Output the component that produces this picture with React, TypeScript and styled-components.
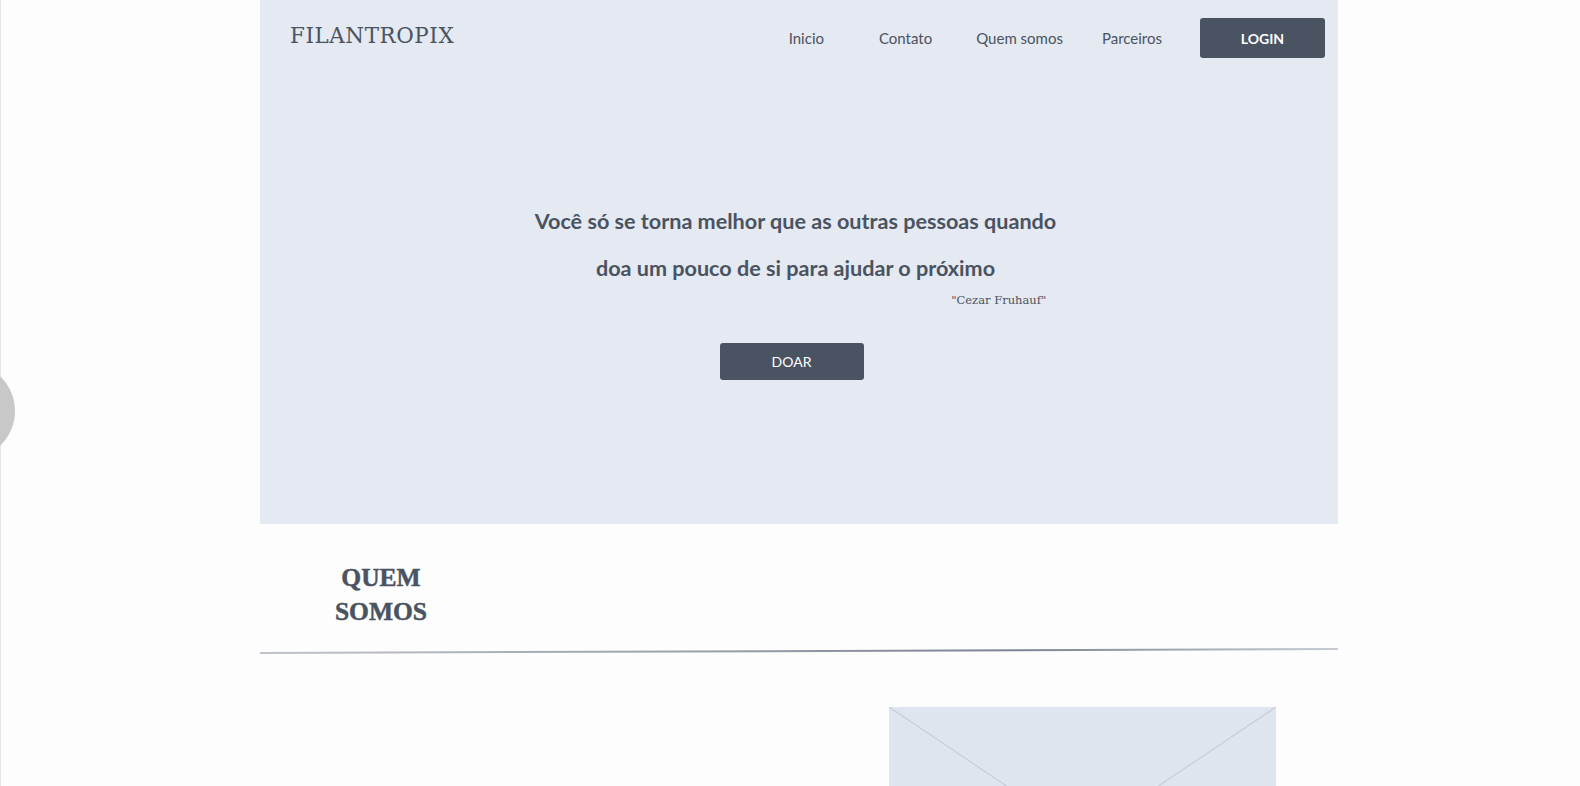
import React from 'react';
import styled, {createGlobalStyle} from 'styled-components';

const GlobalStyle = createGlobalStyle`
  html, body {
    margin: 0;
    padding: 0;
    background: #fdfdfd;
  }
  body {
    font-family: Lato, "Noto Sans", sans-serif;
    color: #4a5361;
    border-left: 1px solid #e6e6e6;
    min-height: 786px;
    overflow: hidden;
  }
`;

const navItems = ['Inicio', 'Contato', 'Quem somos', 'Parceiros'];

export default function App() {
  return (
    <>
      <GlobalStyle />
      <FloatingDot />
      <Page>
        <Hero>
          <Header>
            <Logo>FILANTROPIX</Logo>
            <Nav>
              {navItems.map(item => (
                <NavLink key={item}>{item}</NavLink>
              ))}
              <LoginButton>LOGIN</LoginButton>
            </Nav>
          </Header>
          <QuoteBlock>
            <QuoteText>
              Você só se torna melhor que as outras pessoas quando
              <br />
              doa um pouco de si para ajudar o próximo
            </QuoteText>
            <Author>"Cezar Fruhauf"</Author>
          </QuoteBlock>
          <DonateButton>DOAR</DonateButton>
        </Hero>
        <AboutSection>
          <SectionTitle>
            QUEM
            <br />
            SOMOS
          </SectionTitle>
        </AboutSection>
        <Divider />
        <ContentRow>
          <ImagePlaceholder>
            <svg width="100%" height="100%" preserveAspectRatio="none" viewBox="0 0 387 260">
              <line x1="0" y1="0" x2="387" y2="260" stroke="#c6cdd9" strokeWidth="1.2" />
              <line x1="387" y1="0" x2="0" y2="260" stroke="#c6cdd9" strokeWidth="1.2" />
            </svg>
          </ImagePlaceholder>
        </ContentRow>
      </Page>
    </>
  );
}

const FloatingDot = styled.div`
  position: fixed;
  left: -81px;
  top: 363px;
  width: 96px;
  height: 96px;
  border-radius: 50%;
  background: #c8c8c8;
`;

const Page = styled.div`
  width: 1078px;
  margin: 0 0 0 259px;
`;

const Hero = styled.section`
  height: 524px;
  background: #e4e9f2;
  display: flex;
  flex-direction: column;
  align-items: center;
`;

const Header = styled.header`
  align-self: stretch;
  height: 76px;
  padding: 0 13px 0 30px;
  display: flex;
  justify-content: space-between;
  align-items: center;
  box-sizing: border-box;
`;

const Logo = styled.div`
  font-family: "DejaVu Serif", "Liberation Serif", serif;
  font-size: 21.4px;
  letter-spacing: 0.6px;
  color: #4a5361;
  margin-top: -5px;
`;

const Nav = styled.nav`
  display: flex;
  align-items: center;
`;

const NavLink = styled.a`
  font-size: 15px;
  color: #4a5361;
  margin-right: 42px;
  cursor: pointer;
  &:nth-child(1) {
    margin-right: 55px;
  }
  &:nth-child(2) {
    margin-right: 44px;
  }
  &:nth-child(3) {
    margin-right: 39px;
  }
`;

const LoginButton = styled.button`
  width: 125px;
  height: 40px;
  margin-left: -4px;
  border: none;
  border-radius: 3px;
  background: #4a5361;
  color: #ffffff;
  font-family: Lato, sans-serif;
  font-weight: 700;
  font-size: 14px;
  cursor: pointer;
`;

const QuoteBlock = styled.div`
  margin: 122px 7px 0 0;
  display: flex;
  flex-direction: column;
`;

const QuoteText = styled.h1`
  margin: 0;
  font-size: 21.6px;
  font-weight: 700;
  line-height: 46.5px;
  text-align: center;
  color: #4a5361;
`;

const Author = styled.span`
  align-self: flex-end;
  margin: 0 10px 0 0;
  font-family: "DejaVu Serif", "Liberation Serif", serif;
  font-size: 11.5px;
  line-height: 18px;
  color: #4a5361;
`;

const DonateButton = styled.button`
  margin: 34px 15px 0 0;
  width: 144px;
  height: 37px;
  border: none;
  border-radius: 3px;
  background: #4a5361;
  color: #ffffff;
  font-family: Lato, sans-serif;
  font-size: 14px;
  cursor: pointer;
`;

const AboutSection = styled.section`
  height: 126px;
  padding-top: 37px;
  box-sizing: border-box;
  display: flex;
`;

const SectionTitle = styled.h2`
  width: 242px;
  margin: 0;
  font-family: "Liberation Serif", serif;
  font-weight: 900;
  font-size: 25.5px;
  line-height: 34px;
  text-align: center;
  color: #4a5361;
  -webkit-text-stroke: 0.5px #4a5361;
`;

const Divider = styled.div`
  height: 1.5px;
  background: linear-gradient(to right, #bfc3cc, #9aa0ad 40%, #7c8392 70%, #c6cad2);
  transform: rotate(-0.21deg);
`;

const ContentRow = styled.div`
  display: flex;
  justify-content: flex-end;
  padding: 55px 62px 0 0;
`;

const ImagePlaceholder = styled.div`
  width: 387px;
  height: 260px;
  background: #dfe5ee;
  svg {
    display: block;
  }
`;
